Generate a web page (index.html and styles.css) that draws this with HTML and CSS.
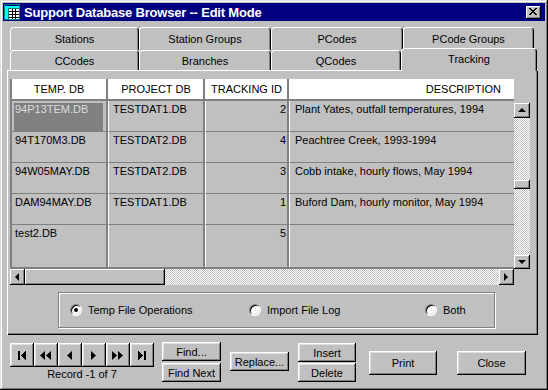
FILE: index.html
```html
<!DOCTYPE html>
<html>
<head>
<meta charset="utf-8">
<link rel="stylesheet" href="styles.css">
</head>
<body>
<div class="window">
  <div class="titlebar">
    <svg class="app-icon" viewBox="0 0 16 16" width="16" height="16" shape-rendering="crispEdges">
      <rect x="0" y="0" width="16" height="16" fill="#008080"/>
      <rect x="1" y="1" width="14" height="3" fill="#00ffff"/>
      <rect x="1" y="4" width="3" height="11" fill="#00ffff"/>
      <rect x="5" y="5" width="10" height="10" fill="#ffffff"/>
      <path d="M5 7.5h10M5 10.5h10M5 13.5h10M8.5 5v10M11.5 5v10" stroke="#000" stroke-width="1"/>
      <rect x="1" y="1" width="14" height="1" fill="#000080"/>
    </svg>
    <span class="title">Support Database Browser -- Edit Mode</span>
    <button class="close-btn" aria-label="Close">
      <svg viewBox="0 0 8 7" width="8" height="7" shape-rendering="crispEdges">
        <path d="M0 0h2v1h-2zM6 0h2v1h-2zM1 1h2v1h-2zM5 1h2v1h-2zM2 2h4v1h-4zM3 3h2v1h-2zM2 4h4v1h-4zM1 5h2v1h-2zM5 5h2v1h-2zM0 6h2v1h-2zM6 6h2v1h-2z" fill="#000"/>
      </svg>
    </button>
  </div>

  <div class="tabs">
    <div class="tab-row back">
      <div class="tab">Stations</div>
      <div class="tab">Station Groups</div>
      <div class="tab">PCodes</div>
      <div class="tab">PCode Groups</div>
    </div>
    <div class="tab-row front">
      <div class="tab">CCodes</div>
      <div class="tab">Branches</div>
      <div class="tab">QCodes</div>
      <div class="tab active">Tracking</div>
    </div>
  </div>

  <div class="panel">
    <div class="grid-wrap">
      <div class="table">
        <div class="trow head">
          <div class="cell c1">TEMP. DB</div>
          <div class="cell c2">PROJECT DB</div>
          <div class="cell c3">TRACKING ID</div>
          <div class="cell c4">DESCRIPTION</div>
        </div>
        <div class="trow">
          <div class="cell c1 sel"><span class="txt">94P13TEM.DB</span></div>
          <div class="cell c2">TESTDAT1.DB</div>
          <div class="cell c3">2</div>
          <div class="cell c4">Plant Yates, outfall temperatures, 1994</div>
        </div>
        <div class="trow">
          <div class="cell c1"><span class="txt">94T170M3.DB</span></div>
          <div class="cell c2">TESTDAT2.DB</div>
          <div class="cell c3">4</div>
          <div class="cell c4">Peachtree Creek, 1993-1994</div>
        </div>
        <div class="trow">
          <div class="cell c1"><span class="txt">94W05MAY.DB</span></div>
          <div class="cell c2">TESTDAT2.DB</div>
          <div class="cell c3">3</div>
          <div class="cell c4">Cobb intake, hourly flows, May 1994</div>
        </div>
        <div class="trow">
          <div class="cell c1"><span class="txt">DAM94MAY.DB</span></div>
          <div class="cell c2">TESTDAT1.DB</div>
          <div class="cell c3">1</div>
          <div class="cell c4">Buford Dam, hourly monitor, May 1994</div>
        </div>
        <div class="trow last">
          <div class="cell c1"><span class="txt">test2.DB</span></div>
          <div class="cell c2"></div>
          <div class="cell c3">5</div>
          <div class="cell c4"></div>
        </div>
      </div>

      <div class="vscroll">
        <div class="sbtn vbtn up"><span class="arr arr-up"></span></div>
        <div class="track vtrack"><div class="thumb vthumb"></div></div>
        <div class="sbtn vbtn down"><span class="arr arr-down"></span></div>
      </div>

      <div class="hscroll">
        <div class="sbtn hbtn"><span class="arr arr-left"></span></div>
        <div class="thumb hthumb"></div>
        <div class="track htrack"></div>
        <div class="sbtn hbtn"><span class="arr arr-right"></span></div>
      </div>
      <div class="corner"></div>
    </div>

    <div class="radio-group">
      <label class="radio-item r1"><span class="radio checked"></span><span>Temp File Operations</span></label>
      <label class="radio-item r2"><span class="radio"></span><span>Import File Log</span></label>
      <label class="radio-item r3"><span class="radio"></span><span>Both</span></label>
    </div>
  </div>

  <div class="bottom">
    <div class="nav-col">
      <div class="nav-btns">
        <button class="btn nav"><svg viewBox="0 0 8 9" width="8" height="9" shape-rendering="crispEdges"><rect x="0" y="0" width="2" height="9"/><path d="M3 4.5L8 0v9z"/></svg></button>
        <button class="btn nav"><svg viewBox="0 0 11 9" width="11" height="9"><path d="M0 4.5L5 0v9zM6 4.5L11 0v9z"/></svg></button>
        <button class="btn nav"><svg viewBox="0 0 5 9" width="5" height="9"><path d="M0 4.5L5 0v9z"/></svg></button>
        <button class="btn nav"><svg viewBox="0 0 5 9" width="5" height="9"><path d="M5 4.5L0 0v9z"/></svg></button>
        <button class="btn nav"><svg viewBox="0 0 11 9" width="11" height="9"><path d="M5 4.5L0 0v9zM11 4.5L6 0v9z"/></svg></button>
        <button class="btn nav"><svg viewBox="0 0 8 9" width="8" height="9" shape-rendering="crispEdges"><path d="M5 4.5L0 0v9z"/><rect x="6" y="0" width="2" height="9"/></svg></button>
      </div>
      <div class="record">Record -1 of 7</div>
    </div>
    <div class="stack find-col">
      <button class="btn small">Find...</button>
      <button class="btn small">Find Next</button>
    </div>
    <button class="btn small replace">Replace...</button>
    <div class="stack ins-col">
      <button class="btn small">Insert</button>
      <button class="btn small">Delete</button>
    </div>
    <button class="btn big print">Print</button>
    <button class="btn big close">Close</button>
  </div>
</div>
</body>
</html>
```

FILE: styles.css
```css
* { box-sizing: border-box; }
html, body { margin: 0; padding: 0; }
body {
  width: 548px;
  height: 390px;
  overflow: hidden;
  background: #c0c0c0;
  font-family: "Liberation Sans", Arial, sans-serif;
  font-size: 11px;
  color: #000;
}

.window {
  width: 548px;
  height: 390px;
  padding: 3px;
  background: #c0c0c0;
  box-shadow: inset -1px -1px #000, inset 1px 1px #dfdfdf, inset -2px -2px #808080, inset 2px 2px #fff;
  display: flex;
  flex-direction: column;
}

/* title bar */
.titlebar {
  flex: none;
  height: 18px;
  background: #000080;
  display: flex;
  align-items: center;
  padding: 0 4px 0 1px;
}
.app-icon { flex: none; display: block; }
.title {
  flex: 1;
  color: #fff;
  font-weight: bold;
  font-size: 13px;
  letter-spacing: -0.2px;
  margin-left: 4px;
  white-space: nowrap;
}
.close-btn {
  width: 15px;
  height: 13px;
  padding: 0;
  border: 0;
  background: #c0c0c0;
  box-shadow: inset -1px -1px #000, inset 1px 1px #fff, inset -2px -2px #808080;
  display: flex;
  align-items: center;
  justify-content: center;
}
.close-btn svg { display: block; margin: 0 1px 1px 0; }

/* tabs */
.tabs {
  flex: none;
  margin: 6px 0 0 7px;
  position: relative;
  z-index: 1;
}
.tab-row { display: flex; }
.tab-row.back { height: 23px; }
.tab-row.front { height: 20px; }
.tab {
  display: flex;
  align-items: center;
  justify-content: center;
  background: #c0c0c0;
  border-top: 1px solid #fff;
  border-left: 1px solid #fff;
  border-right: 1px solid #000;
  box-shadow: inset -1px 0 #808080;
  border-radius: 4px 4px 0 0;
  white-space: nowrap;
}
.back .tab { padding-bottom: 1px; }
.back .tab:nth-child(1) { width: 129px; }
.back .tab:nth-child(2) { width: 132px; }
.back .tab:nth-child(3) { width: 132px; }
.back .tab:nth-child(4) { width: 131px; }
.front .tab:nth-child(1) { width: 129px; }
.front .tab:nth-child(2) { width: 132px; }
.front .tab:nth-child(3) { width: 130px; }
.front .tab.active {
  width: 136px;
  margin-top: -2px;
  margin-bottom: -1px;
  padding-bottom: 3px;
}

/* panel */
.panel {
  flex: none;
  margin-left: 4px;
  width: 531px;
  height: 265px;
  background: #c0c0c0;
  box-shadow: inset 1px 1px #fff, inset -1px -1px #000, inset -2px -2px #808080;
  padding: 9px 0 0 3px;
}

.grid-wrap {
  display: grid;
  grid-template-columns: 504px 16px;
  grid-template-rows: 190px 16px;
}

.table {
  border-left: 2px solid #808080;
  border-bottom: 2px solid #808080;
  display: flex;
  flex-direction: column;
  background: #c0c0c0;
}
.trow {
  display: grid;
  grid-template-columns: 96px 97px 84px 225px;
  height: 31px;
  flex: none;
}
.trow.head {
  height: 22px;
  background: #fff;
  border-bottom: 2px solid #808080;
}
.trow.last { flex: 1; }

.cell {
  border-right: 2px solid #808080;
  border-bottom: 1px solid #808080;
  padding-top: 2px;
  line-height: 12px;
  white-space: nowrap;
  overflow: hidden;
}
.cell.c2, .cell.c3, .cell.c4 { border-left: 1px solid #fff; }
.cell.c4 { border-right: 0; padding-left: 5px; }
.cell.c1 { padding: 2px 3px 0 2px; }
.cell.c2 { padding-left: 4px; }
.cell.c3 { text-align: right; padding-right: 1px; }
.txt { padding-left: 1px; }
.trow.last .cell { border-bottom: 0; }

.head .cell {
  border-bottom: 0;
  padding: 0;
  line-height: 20px;
  text-align: center;
}
.head .cell.c4 { text-align: right; padding-right: 13px; }

.cell.sel {
  background: #808080;
  background-clip: content-box;
  color: #dcdcdc;
}

/* scrollbars */
.sbtn {
  background: #c0c0c0;
  box-shadow: inset -1px -1px #000, inset 1px 1px #fff, inset -2px -2px #808080;
  display: flex;
  align-items: center;
  justify-content: center;
  flex: none;
}
.track {
  background-color: #fff;
  background-image: conic-gradient(#fff 0 25%, #c0c0c0 0 50%, #fff 0 75%, #c0c0c0 0);
  background-size: 2px 2px;
}
.thumb {
  background: #c0c0c0;
  box-shadow: inset -1px -1px #000, inset 1px 1px #fff, inset -2px -2px #808080;
}

.vscroll {
  display: flex;
  flex-direction: column;
  padding-top: 24px;
}
.vbtn.up { height: 15px; }
.vbtn.down { height: 14px; }
.vtrack { flex: 1; }
.vthumb { height: 9px; margin-top: 62px; }

.hscroll { display: flex; }
.hbtn { width: 15px; }
.hthumb { width: 140px; flex: none; }
.htrack { flex: 1; }
.corner { background: #c0c0c0; }

.arr { width: 0; height: 0; display: block; }
.arr-up { border-left: 4px solid transparent; border-right: 4px solid transparent; border-bottom: 4px solid #000; margin: 0 1px 1px 0; }
.arr-down { border-left: 4px solid transparent; border-right: 4px solid transparent; border-top: 4px solid #000; margin: 0 1px 1px 0; }
.arr-left { border-top: 4px solid transparent; border-bottom: 4px solid transparent; border-right: 4px solid #000; margin: 0 1px 1px 0; }
.arr-right { border-top: 4px solid transparent; border-bottom: 4px solid transparent; border-left: 4px solid #000; margin: 0 1px 1px 0; }

/* radio group */
.radio-group {
  margin: 7px 0 0 48px;
  width: 437px;
  height: 36px;
  border: 1px solid #808080;
  box-shadow: inset 1px 1px #fff, 1px 1px #fff;
  display: flex;
  align-items: center;
  padding-left: 11px;
}
.radio-item { display: flex; align-items: center; white-space: nowrap; }
.radio-item.r1 { width: 179px; }
.radio-item.r2 { width: 176px; }
.radio {
  width: 12px;
  height: 12px;
  border-radius: 50%;
  background: #fff;
  border: 1px solid;
  border-color: #808080 #fff #fff #808080;
  box-shadow: inset 1px 1px #000, inset -1px -1px #dfdfdf;
  margin-right: 6px;
  display: flex;
  align-items: center;
  justify-content: center;
  flex: none;
}
.radio.checked::after {
  content: "";
  width: 4px;
  height: 4px;
  border-radius: 50%;
  background: #000;
}

/* bottom */
.bottom {
  flex: none;
  display: flex;
  align-items: flex-start;
  padding: 7px 0 0 7px;
}
.btn {
  font-family: inherit;
  font-size: 11px;
  color: #000;
  border: 0;
  padding: 0;
  margin: 0;
  background: #c0c0c0;
  box-shadow: inset -1px -1px #000, inset 1px 1px #fff, inset -2px -2px #808080, inset 2px 2px #dfdfdf;
  display: flex;
  align-items: center;
  justify-content: center;
}
.nav-col { margin-top: 1px; width: 144px; display: flex; flex-direction: column; }
.nav-btns { display: flex; }
.btn.nav { width: 24px; height: 24px; }
.btn.nav svg { display: block; fill: #000; margin-right: 1px; }
.record { text-align: center; line-height: 12px; margin-top: 1px; }

.stack { display: flex; flex-direction: column; gap: 2px; }
.find-col { margin-left: 8px; width: 59px; }
.ins-col { margin-left: 9px; width: 58px; margin-top: 1px; gap: 1px; }
.btn.small { height: 19px; width: 100%; }
.btn.replace { margin: 10px 0 0 9px; width: 59px; }
.btn.big { height: 24px; margin-top: 9px; }
.btn.print { margin-left: 13px; width: 68px; }
.btn.close { margin-left: 20px; width: 69px; }
```
